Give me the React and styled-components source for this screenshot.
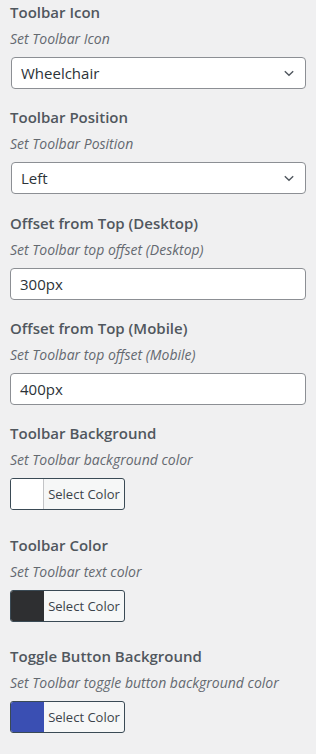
import React from "react";
import styled, { createGlobalStyle } from "styled-components";

const Global = createGlobalStyle`
  html, body { margin: 0; padding: 0; background: #f0f0f1; }
  body { font-family: "Open Sans", "Noto Sans", sans-serif; color: #3c434a; }
  * { box-sizing: border-box; }
`;

const Panel = styled.div`
  display: flex;
  flex-direction: column;
  padding: 1px 10px 0 10px;
  width: 316px;
`;

const Section = styled.section`
  display: flex;
  flex-direction: column;
  margin-bottom: ${(p) => (p.$color ? "23.5px" : "17.3px")};
`;

const Title = styled.h3`
  margin: 0;
  font-size: 15px;
  font-weight: 600;
  line-height: 22px;
  color: #50575e;
`;

const Desc = styled.p`
  margin: 6px 0 0 0;
  font-size: 14px;
  font-style: italic;
  line-height: 20px;
  color: #646970;
`;

const SelectBox = styled.div`
  margin-top: 8px;
  margin-left: 1px;
  height: 32px;
  display: flex;
  align-items: center;
  justify-content: space-between;
  padding: 0 9px 0 9px;
  background: #fff;
  border: 1px solid #8c8f94;
  border-radius: 4px;
  font-size: 15px;
  color: #2c3338;
`;

const TextInput = styled.div`
  margin-top: 8px;
  height: 32px;
  display: flex;
  align-items: center;
  padding: 0 9px;
  background: #fff;
  border: 1px solid #8c8f94;
  border-radius: 4px;
  font-size: 15px;
  color: #2c3338;
`;

const ColorButton = styled.div`
  margin-top: 8px;
  width: 115px;
  height: 32px;
  display: flex;
  align-items: stretch;
  border: 1px solid #3a4a55;
  border-radius: 3px;
  overflow: hidden;
  background: #f6f7f7;
`;

const Swatch = styled.span`
  width: 33px;
  flex: none;
  background: ${(p) => p.$color};
  border-right: 1px solid ${(p) => (p.$color === "#ffffff" ? "#c3c4c7" : p.$color)};
`;

const ColorLabel = styled.span`
  flex: 1;
  display: flex;
  align-items: center;
  justify-content: center;
  font-size: 13px;
  color: #3c434a;
`;

const Chevron = () => (
  <svg width="14" height="14" viewBox="0 0 14 14" fill="none">
    <path d="M2.8 5.2 L7 9.2 L11.2 5.2" stroke="#50575e" strokeWidth="1.4" />
  </svg>
);

const selects = [
  { title: "Toolbar Icon", desc: "Set Toolbar Icon", value: "Wheelchair" },
  { title: "Toolbar Position", desc: "Set Toolbar Position", value: "Left" },
];
const inputs = [
  { title: "Offset from Top (Desktop)", desc: "Set Toolbar top offset (Desktop)", value: "300px" },
  { title: "Offset from Top (Mobile)", desc: "Set Toolbar top offset (Mobile)", value: "400px" },
];
const colors = [
  { title: "Toolbar Background", desc: "Set Toolbar background color", color: "#ffffff" },
  { title: "Toolbar Color", desc: "Set Toolbar text color", color: "#2e2f31" },
  { title: "Toggle Button Background", desc: "Set Toolbar toggle button background color", color: "#3a4fb3" },
];

export default function App() {
  return (
    <>
      <Global />
      <Panel>
        {selects.map((s) => (
          <Section key={s.title}>
            <Title>{s.title}</Title>
            <Desc>{s.desc}</Desc>
            <SelectBox>
              <span>{s.value}</span>
              <Chevron />
            </SelectBox>
          </Section>
        ))}
        {inputs.map((s) => (
          <Section key={s.title}>
            <Title>{s.title}</Title>
            <Desc>{s.desc}</Desc>
            <TextInput>{s.value}</TextInput>
          </Section>
        ))}
        {colors.map((s) => (
          <Section key={s.title} $color>
            <Title>{s.title}</Title>
            <Desc>{s.desc}</Desc>
            <ColorButton>
              <Swatch $color={s.color} />
              <ColorLabel>Select Color</ColorLabel>
            </ColorButton>
          </Section>
        ))}
      </Panel>
    </>
  );
}
